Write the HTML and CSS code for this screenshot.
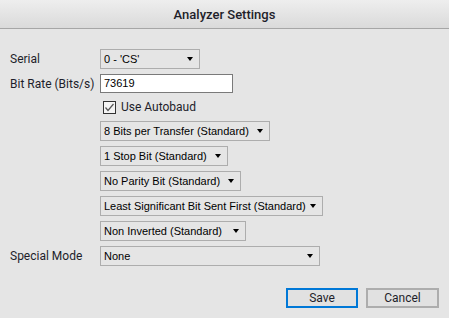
FILE: index.html
```html
<!DOCTYPE html>
<html lang="en">
<head>
    <meta charset="UTF-8">
    <title>Analyzer Settings</title>
    <link rel="stylesheet" href="styles.css">
</head>
<body>
    <div class="titlebar">Analyzer Settings</div>
    <div class="settings">
        <label class="label">Serial</label>
        <div class="select w-serial"><span>0 - 'CS'</span></div>

        <label class="label">Bit Rate (Bits/s)</label>
        <div class="input">73619</div>

        <span></span>
        <div class="check">
            <svg width="13" height="13" viewBox="0 0 13 13">
                <rect x="0.5" y="0.5" width="12" height="12" fill="#f4f4f4" stroke="#333"/>
                <path d="M2.5 6.5 L5 9.5 L10.5 3" fill="none" stroke="#555" stroke-width="1.2"/>
            </svg>
            <span>Use Autobaud</span>
        </div>

        <span></span>
        <div class="select w-bits"><span>8 Bits per Transfer (Standard)</span></div>

        <span></span>
        <div class="select w-stop"><span>1 Stop Bit (Standard)</span></div>

        <span></span>
        <div class="select w-parity"><span>No Parity Bit (Standard)</span></div>

        <span></span>
        <div class="select w-order"><span>Least Significant Bit Sent First (Standard)</span></div>

        <span></span>
        <div class="select w-invert"><span>Non Inverted (Standard)</span></div>

        <label class="label">Special Mode</label>
        <div class="select w-mode"><span>None</span></div>
    </div>
    <div class="buttons">
        <button class="btn default">Save</button>
        <button class="btn">Cancel</button>
    </div>
</body>
</html>
```

FILE: styles.css
```css
body {
    margin: 0;
    width: 449px;
    height: 318px;
    background: #e5e5e5;
    font-family: Roboto, "Liberation Sans", sans-serif;
    color: #1e1e2a;
    overflow: hidden;
}
.titlebar {
    height: 28px;
    line-height: 30px;
    text-align: center;
    font-size: 13px;
    font-weight: 500;
    background: linear-gradient(#eeeeee, #dadada);
    border-bottom: 1px solid #a6a6a6;
}
.settings {
    display: grid;
    grid-template-columns: 90px auto;
    grid-template-rows: 20px 19px 18px;
    grid-auto-rows: 20px;
    row-gap: 5px;
    padding: 20px 0 0 10px;
    justify-items: start;
}
.label {
    font-size: 12px;
    line-height: 20px;
}
.select, .input {
    box-sizing: border-box;
    height: 20px;
    font-family: "Liberation Sans", Arial, sans-serif;
    font-size: 11px;
    color: #000;
}
.select {
    display: flex;
    align-items: center;
    padding: 0 6px 0 3px;
    border: 1px solid #adadad;
    background: #e5e5e5;
}
.select::after {
    content: "";
    margin-left: auto;
    border-left: 3.5px solid transparent;
    border-right: 3.5px solid transparent;
    border-top: 4px solid #000;
}
.w-serial { width: 100px; }
.w-bits { width: 170px; }
.w-stop { width: 128px; }
.w-parity { width: 141px; }
.w-order { width: 223px; }
.w-invert { width: 146px; }
.w-mode { width: 220px; }
.input {
    width: 133px;
    height: 19px;
    line-height: 17px;
    padding-left: 3px;
    border: 1px solid #7a7a7a;
    background: #fff;
}
.check {
    display: flex;
    align-items: center;
    gap: 5px;
    padding-left: 3px;
    font-size: 12px;
}
.check svg {
    display: block;
}
.buttons {
    display: flex;
    justify-content: flex-end;
    gap: 8px;
    padding: 22px 10px 0 0;
}
.btn {
    box-sizing: border-box;
    width: 73px;
    height: 20px;
    padding: 0;
    font-family: Roboto, "Liberation Sans", sans-serif;
    font-size: 12px;
    color: #1e1e2a;
    background: #e1e1e1;
    border: 2px solid #adadad;
}
.btn.default {
    width: 72px;
    border-color: #0078d7;
}
```
